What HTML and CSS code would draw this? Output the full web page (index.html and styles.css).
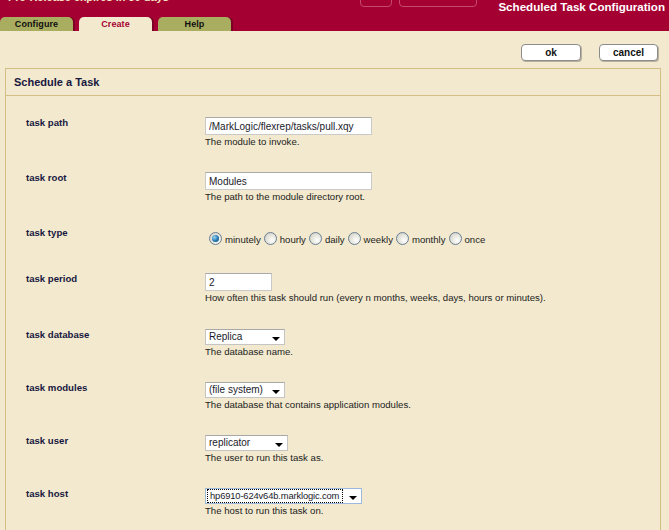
FILE: index.html
```html
<!DOCTYPE html>
<html>
<head>
<meta charset="utf-8">
<title>Scheduled Task Configuration</title>
<link rel="stylesheet" href="styles.css">
</head>
<body>
<header class="top">
  <div class="top-left">
    <div class="license">Pre-Release expires in 30 days</div>
    <nav class="tabs">
      <span class="tab">Configure</span>
      <span class="tab active">Create</span>
      <span class="tab">Help</span>
    </nav>
  </div>
  <div class="top-boxes">
    <span class="tbox small"></span>
    <span class="tbox wide"></span>
  </div>
  <div class="title">Scheduled Task Configuration</div>
</header>

<main class="main">
  <div class="actions">
    <button class="btn btn-ok">ok</button>
    <button class="btn btn-cancel">cancel</button>
  </div>

  <section class="panel">
    <h2 class="panel-title">Schedule a Task</h2>
    <div class="panel-body">
      <div class="row">
        <div class="label">task path</div>
        <div class="field">
          <input class="text wide-input" type="text" value="/MarkLogic/flexrep/tasks/pull.xqy">
          <div class="help">The module to invoke.</div>
        </div>
      </div>

      <div class="row">
        <div class="label">task root</div>
        <div class="field">
          <input class="text wide-input" type="text" value="Modules">
          <div class="help">The path to the module directory root.</div>
        </div>
      </div>

      <div class="row row-radio">
        <div class="label">task type</div>
        <div class="field radios">
          <span class="opt"><span class="radio checked"></span>minutely</span>
          <span class="opt"><span class="radio"></span>hourly</span>
          <span class="opt"><span class="radio"></span>daily</span>
          <span class="opt"><span class="radio"></span>weekly</span>
          <span class="opt"><span class="radio"></span>monthly</span>
          <span class="opt"><span class="radio"></span>once</span>
        </div>
      </div>

      <div class="row row-period">
        <div class="label">task period</div>
        <div class="field">
          <input class="text short-input" type="text" value="2">
          <div class="help">How often this task should run (every n months, weeks, days, hours or minutes).</div>
        </div>
      </div>

      <div class="row">
        <div class="label">task database</div>
        <div class="field">
          <div class="select sel-80"><span class="sel-text">Replica</span><span class="arrow"></span></div>
          <div class="help">The database name.</div>
        </div>
      </div>

      <div class="row">
        <div class="label">task modules</div>
        <div class="field">
          <div class="select sel-80"><span class="sel-text">(file system)</span><span class="arrow"></span></div>
          <div class="help">The database that contains application modules.</div>
        </div>
      </div>

      <div class="row">
        <div class="label">task user</div>
        <div class="field">
          <div class="select sel-83"><span class="sel-text">replicator</span><span class="arrow"></span></div>
          <div class="help">The user to run this task as.</div>
        </div>
      </div>

      <div class="row">
        <div class="label">task host</div>
        <div class="field">
          <div class="select sel-host focused"><span class="sel-text">hp6910-624v64b.marklogic.com</span><span class="arrow"></span></div>
          <div class="help">The host to run this task on.</div>
        </div>
      </div>
    </div>
  </section>
</main>
</body>
</html>
```

FILE: styles.css
```css
* { box-sizing: border-box; }

html, body {
  margin: 0;
  padding: 0;
  background: #f2e9ce;
  font-family: "Liberation Sans", Arial, sans-serif;
  overflow: hidden;
}

.top {
  height: 31px;
  background: #a50032;
  display: flex;
  align-items: flex-start;
  overflow: hidden;
}

.top-left {
  width: 240px;
  height: 31px;
  display: flex;
  flex-direction: column;
  justify-content: space-between;
}

.license {
  margin-top: -8px;
  padding-left: 8px;
  font-size: 11px;
  line-height: 11px;
  font-weight: bold;
  color: #f4e4c4;
  white-space: nowrap;
}

.tabs {
  display: flex;
  gap: 6px;
  height: 14px;
}

.tab {
  width: 73px;
  height: 14px;
  background: #a9ad60;
  border-radius: 5px 5px 0 0;
  box-shadow: 2px 0 0 #7c0024;
  font-size: 9px;
  font-weight: bold;
  line-height: 15px;
  text-align: center;
  color: #101010;
  letter-spacing: 0.1px;
}

.tab.active {
  background: #f2e9ce;
  color: #a50032;
}

.top-boxes {
  display: flex;
  gap: 7px;
  margin-left: 120px;
  margin-top: -4px;
}

.tbox {
  height: 11px;
  border: 1px solid #c64a6e;
  border-radius: 4px;
}

.tbox.small { width: 32px; }
.tbox.wide { width: 78px; }

.title {
  margin-left: auto;
  padding-right: 4px;
  font-size: 11.6px;
  line-height: 14px;
  font-weight: bold;
  color: #ffffff;
  white-space: nowrap;
}

.main {
  padding-top: 13px;
}

.actions {
  display: flex;
  justify-content: flex-end;
  gap: 18px;
  padding-right: 11px;
}

.btn {
  height: 17px;
  padding: 0;
  background: #ffffff;
  border: 1px solid #8c8c8c;
  border-radius: 4px;
  box-shadow: 1px 1px 0 #b8b09a;
  font-family: "Liberation Sans", Arial, sans-serif;
  font-size: 10px;
  font-weight: bold;
  color: #111111;
}

.btn-ok { width: 60px; }
.btn-cancel { width: 59px; }

.panel {
  margin: 7px 8px 0 5px;
  border: 1px solid #d3be86;
  border-bottom: none;
  height: 470px;
}

.panel-title {
  margin: 0;
  height: 27px;
  padding-left: 8px;
  border-bottom: 1px solid #d3be86;
  font-size: 11px;
  line-height: 27px;
  font-weight: bold;
  color: #17173f;
}

.panel-body {
  padding: 21px 0 0 20px;
}

.row {
  display: grid;
  grid-template-columns: 179px 1fr;
  margin-bottom: 24px;
}

.row-period { margin-bottom: 25px; }

.label {
  font-size: 9.6px;
  font-weight: bold;
  line-height: 12px;
  color: #17173f;
}

.field {
  display: flex;
  flex-direction: column;
  align-items: flex-start;
}

.text {
  height: 18px;
  padding: 0 3px;
  margin: 0;
  background: #ffffff;
  border: 1px solid #c9c9c9;
  border-top-color: #a9a9a9;
  font-family: "Liberation Sans", Arial, sans-serif;
  font-size: 10px;
  color: #1a1a2a;
  outline: none;
}

.wide-input { width: 167px; }
.short-input { width: 67px; }

.help {
  font-size: 9.6px;
  line-height: 13px;
  color: #1c1c1c;
  white-space: nowrap;
}

.radios {
  flex-direction: row;
  align-items: center;
  height: 22px;
  padding-top: 2px;
  padding-left: 4px;
  gap: 3px;
}

.opt {
  display: flex;
  align-items: center;
  font-size: 9.6px;
  color: #1c1c1c;
  line-height: 13px;
  padding-top: 1px;
}

.radio {
  width: 13px;
  height: 13px;
  border-radius: 50%;
  border: 1px solid #6a7f93;
  background: radial-gradient(circle at 65% 65%, #ffffff 0%, #e8e8e0 45%, #c9c9bf 100%);
  margin-right: 3px;
  margin-top: -3px;
  flex: none;
  position: relative;
}

.radio.checked::after {
  content: "";
  position: absolute;
  left: 2px;
  top: 2px;
  width: 7px;
  height: 7px;
  border-radius: 50%;
  background: radial-gradient(circle at 35% 35%, #9ad6f2 0%, #2a7fb8 50%, #0b3f66 100%);
}

.select {
  height: 16px;
  background: #ffffff;
  border: 1px solid #c4c4c4;
  border-top-color: #a8a8a8;
  display: flex;
  align-items: center;
  justify-content: space-between;
  padding: 0 4px 0 3px;
  font-size: 10px;
  color: #1a1a2a;
}

.sel-80 { width: 80px; }
.sel-83 { width: 83px; }
.sel-host { width: 157px; }

.sel-text {
  line-height: 12px;
  white-space: nowrap;
}

.arrow {
  flex: none;
  width: 0;
  height: 0;
  border-left: 4px solid transparent;
  border-right: 4px solid transparent;
  border-top: 4px solid #000000;
  margin-top: 4px;
}

.select.focused {
  border: 1px solid #9cb8da;
  padding-left: 1px;
}

.select.focused .sel-text {
  border: 1px dotted #000000;
  padding: 0 3px 0 2px;
  line-height: 12px;
  font-size: 9.4px;
  letter-spacing: -0.15px;
}
```
